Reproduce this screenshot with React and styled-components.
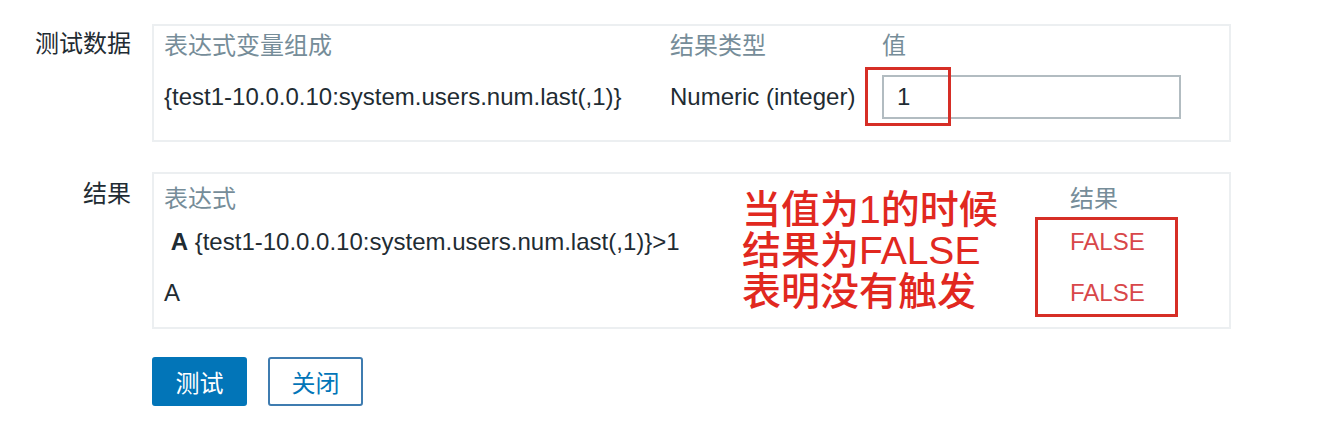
import styled, { createGlobalStyle } from "styled-components";

const GlobalStyle = createGlobalStyle`
  body {
    margin: 0;
    background: #fff;
    font-family: "Liberation Sans", Arial, "Noto Sans CJK SC", sans-serif;
    color: #1f2c33;
  }
`;

const Page = styled.div`
  width: 1328px;
  height: 432px;
  padding-top: 24px;
  box-sizing: border-box;
  font-size: 24px;
  line-height: 28px;
`;

const Form = styled.div`
  display: grid;
  grid-template-columns: 131px 1079px;
  column-gap: 21px;
  row-gap: 30px;
`;

const Label = styled.div`
  text-align: right;
  padding-top: ${(p) => p.$top || 6}px;
`;

const Panel = styled.div`
  position: relative;
  border: 2px solid #eceff1;
  padding: ${(p) => p.$top}px 10px 0;
  box-sizing: border-box;
  height: ${(p) => p.$h}px;
`;

const Table = styled.table`
  border-collapse: collapse;
  width: 100%;
  td,
  th {
    padding: 0;
    text-align: left;
    font-weight: normal;
  }
`;

const Head = styled.th`
  color: #768d99;
  vertical-align: top;
  height: ${(p) => p.$h}px;
  width: ${(p) => p.$w || "auto"};
`;

const Cell = styled.td`
  vertical-align: middle;
  height: ${(p) => p.$h}px;
  white-space: nowrap;
`;

const Result = styled(Cell)`
  color: #d8474a;
`;

const Input = styled.div`
  width: 299px;
  height: 44px;
  box-sizing: border-box;
  border: 2px solid #b2bcc1;
  padding-left: 13px;
  display: flex;
  align-items: center;
`;

const Mark = styled.div`
  position: absolute;
  border: 3px solid #d62e26;
  box-sizing: border-box;
  left: ${(p) => p.$x}px;
  top: ${(p) => p.$y}px;
  width: ${(p) => p.$w}px;
  height: ${(p) => p.$h}px;
`;

const Note = styled.div`
  position: absolute;
  left: 588px;
  top: 15px;
  color: #e1281f;
  font-size: 39px;
  font-weight: 500;
  line-height: 41px;
  white-space: nowrap;
`;

const Buttons = styled.div`
  display: flex;
  gap: 21px;
  margin-top: -2px;
`;

const Button = styled.button`
  width: 95px;
  height: 49px;
  border-radius: 3px;
  font-family: inherit;
  font-size: 24px;
  border: 2px solid ${(p) => (p.$alt ? "#3f7cb0" : "#0275b8")};
  background: ${(p) => (p.$alt ? "#fff" : "#0275b8")};
  color: ${(p) => (p.$alt ? "#0275b8" : "#fff")};
`;

const expr = "{test1-10.0.0.10:system.users.num.last(,1)}";

export default function App() {
  return (
    <Page>
      <GlobalStyle />
      <Form>
        <Label>测试数据</Label>
        <Panel $h={118} $top={6}>
          <Table>
            <thead>
              <tr>
                <Head $w="506px" $h={35}>表达式变量组成</Head>
                <Head $w="212px" $h={35}>结果类型</Head>
                <Head $h={35}>值</Head>
              </tr>
            </thead>
            <tbody>
              <tr>
                <Cell $h={60}>{expr}</Cell>
                <Cell $h={60}>Numeric (integer)</Cell>
                <Cell $h={60}>
                  <Input>1</Input>
                </Cell>
              </tr>
            </tbody>
          </Table>
          <Mark $x={711} $y={41} $w={86} $h={59} />
        </Panel>

        <Label $top={8}>结果</Label>
        <Panel $h={157} $top={11}>
          <Table>
            <thead>
              <tr>
                <Head $w="906px" $h={34}>表达式</Head>
                <Head $h={34}>结果</Head>
              </tr>
            </thead>
            <tbody>
              <tr>
                <Cell $h={46}>
                  &nbsp;<b>A</b> {expr}&gt;1
                </Cell>
                <Result $h={46}>FALSE</Result>
              </tr>
              <tr>
                <Cell $h={56}>A</Cell>
                <Result $h={56}>FALSE</Result>
              </tr>
            </tbody>
          </Table>
          <Note>
            当值为1的时候
            <br />
            结果为FALSE
            <br />
            表明没有触发
          </Note>
          <Mark $x={881} $y={43} $w={143} $h={100} />
        </Panel>

        <div />
        <Buttons>
          <Button>测试</Button>
          <Button $alt>关闭</Button>
        </Buttons>
      </Form>
    </Page>
  );
}
